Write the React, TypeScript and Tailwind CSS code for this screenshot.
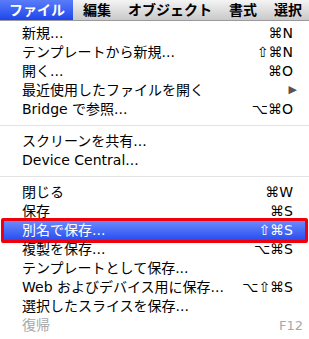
type Item =
	| { kind: "item"; label: string; shortcut?: string; submenu?: boolean; disabled?: boolean; selected?: boolean }
	| { kind: "sep" };

const items: Item[] = [
	{ kind: "item", label: "新規...", shortcut: "⌘N" },
	{ kind: "item", label: "テンプレートから新規...", shortcut: "⇧⌘N" },
	{ kind: "item", label: "開く...", shortcut: "⌘O" },
	{ kind: "item", label: "最近使用したファイルを開く", submenu: true },
	{ kind: "item", label: "Bridge で参照...", shortcut: "⌥⌘O" },
	{ kind: "sep" },
	{ kind: "item", label: "スクリーンを共有..." },
	{ kind: "item", label: "Device Central..." },
	{ kind: "sep" },
	{ kind: "item", label: "閉じる", shortcut: "⌘W" },
	{ kind: "item", label: "保存", shortcut: "⌘S" },
	{ kind: "item", label: "別名で保存...", shortcut: "⇧⌘S", selected: true },
	{ kind: "item", label: "複製を保存...", shortcut: "⌥⌘S" },
	{ kind: "item", label: "テンプレートとして保存..." },
	{ kind: "item", label: "Web およびデバイス用に保存...", shortcut: "⌥⇧⌘S" },
	{ kind: "item", label: "選択したスライスを保存..." },
	{ kind: "item", label: "復帰", shortcut: "F12", disabled: true },
];

const menus = ["編集", "オブジェクト", "書式", "選択"];

const font = { fontFamily: '"Lucida Grande", "DejaVu Sans", "Noto Sans CJK JP", sans-serif' };

export default function App() {
	return (
		<div className="w-[309px] h-[339px] overflow-hidden bg-white text-black" style={font}>
			{/* menu bar */}
			<div className="flex h-[21px] items-stretch whitespace-nowrap bg-gradient-to-b from-[#f4f4f4] to-[#c9c9c9] border-b border-[#9a9a9a] text-[14px] font-bold leading-[20px]">
				<div className="w-[73px] shrink-0 pl-[9px] text-white bg-gradient-to-b from-[#5a7cf9] to-[#1f44ec]">ファイル</div>
				<div className="flex shrink-0 gap-[17px] pl-[10px]">
					{menus.map((m) => (
						<span key={m} className="shrink-0">
							{m}
						</span>
					))}
				</div>
			</div>

			{/* dropdown */}
			<div className="pt-[3px] text-[14px] whitespace-nowrap">
				{items.map((it, i) =>
					it.kind === "sep" ? (
						<div key={i} className="py-[6px]">
							<div className="h-px bg-[#e3e3e3]" />
						</div>
					) : it.selected ? (
						<div key={i} className="mx-[1px] -my-[3px] border-[3px] border-[#f0000a] rounded-[2px]">
							<div className="flex h-[19px] items-center pl-[18px] pr-[12px] text-white bg-gradient-to-b from-[#6b88fb] to-[#2a4cf0]">
								<span className="flex-1">{it.label}</span>
								<span>{it.shortcut}</span>
							</div>
						</div>
					) : (
						<div
							key={i}
							className={`flex h-[19px] items-center pl-[22px] ${it.disabled ? "pr-[6px] text-[#a8a8a8]" : "pr-[16px]"}`}
						>
							<span className="flex-1">{it.label}</span>
							{it.shortcut && <span className={it.disabled ? "text-[13px]" : ""}>{it.shortcut}</span>}
							{it.submenu && <span className="text-[11px] text-[#555] -mr-[4px]">▶</span>}
						</div>
					),
				)}
			</div>
		</div>
	);
}
